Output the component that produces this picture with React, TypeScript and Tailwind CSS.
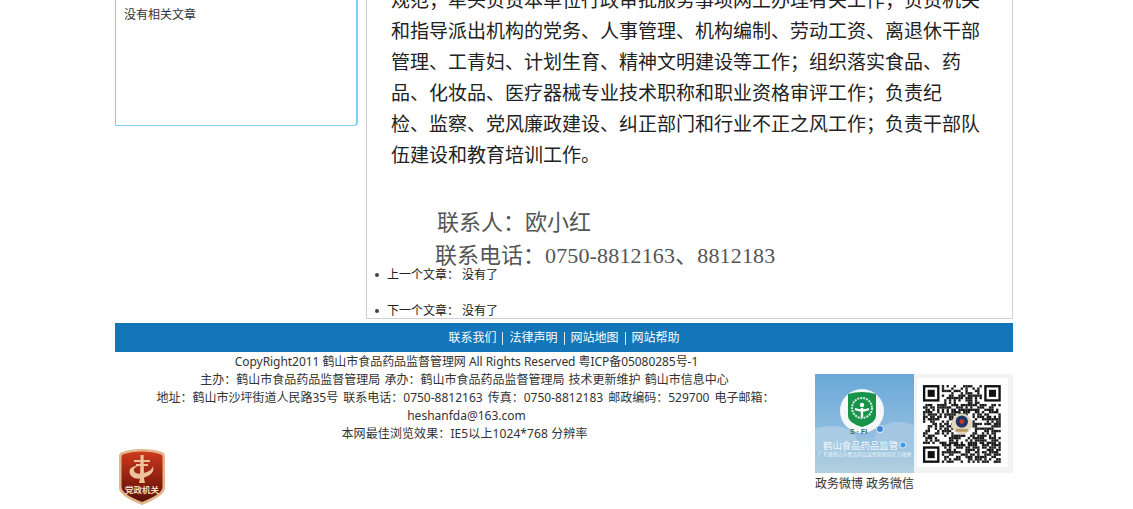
const bodyLines = [
  "规范；牵头负责本单位行政审批服务事项网上办理有关工作；负责机关",
  "和指导派出机构的党务、人事管理、机构编制、劳动工资、离退休干部",
  "管理、工青妇、计划生育、精神文明建设等工作；组织落实食品、药",
  "品、化妆品、医疗器械专业技术职称和职业资格审评工作；负责纪",
  "检、监察、党风廉政建设、纠正部门和行业不正之风工作；负责干部队",
  "伍建设和教育培训工作。",
];

const footerLinks = ["联系我们", "法律声明", "网站地图", "网站帮助"];

function WeiboPicture() {
  return (
    <svg width="99" height="99" viewBox="0 0 99 99" className="block shrink-0">
      <defs>
        <linearGradient id="sky" x1="0" y1="0" x2="0" y2="1">
          <stop offset="0" stopColor="#69a8d8" />
          <stop offset="0.6" stopColor="#8fbde0" />
          <stop offset="1" stopColor="#b4d1e0" />
        </linearGradient>
      </defs>
      <rect width="99" height="99" fill="url(#sky)" />
      <ellipse cx="16" cy="66" rx="26" ry="14" fill="#a9cbe4" />
      <ellipse cx="84" cy="64" rx="24" ry="16" fill="#a3c7e2" />
      <circle cx="47" cy="37" r="22" fill="#f5f8f8" />
      <path d="M33 20q14-4 28 0v22q0 7-14 11q-14-4-14-11z" fill="#17934a" />
      <circle cx="47" cy="34" r="10" fill="none" stroke="#d8efdf" strokeWidth="2" strokeDasharray="2 1" />
      <circle cx="47" cy="31" r="2.2" fill="#fff" />
      <path d="M40 35q7 3 14 0M47 34v9" stroke="#fff" strokeWidth="2.4" fill="none" />
      <text x="35" y="60" fontSize="7" fontWeight="700" fill="#2f6f48" fontFamily="Liberation Sans">S · FI</text>
      <circle cx="65" cy="55" r="3.6" fill="#3d86d0" stroke="#fff" strokeWidth="0.8" />
      <text x="8" y="75" fontSize="9.4" fill="#f4f8fb" fontFamily="Noto Sans CJK SC">鹤山食品药品监管</text>
      <circle cx="88" cy="71" r="3" fill="#3d9ae0" stroke="#e8f3fa" strokeWidth="0.8" />
      <text x="3" y="82" fontSize="4.9" fill="#eef4f8" fontFamily="Noto Sans CJK SC">广东省鹤山市食品药品监督管理局官方微博</text>
    </svg>
  );
}

// finder patterns plus pseudo-random modules
const qrCells: [number, number][] = [];
for (let y = 0; y < 33; y++) {
  for (let x = 0; x < 33; x++) {
    const inFinder = (x < 8 && y < 8) || (x > 24 && y < 8) || (x < 8 && y > 24);
    const inLogo = x > 12 && x < 21 && y > 12 && y < 21;
    if (inFinder || inLogo) continue;
    const h = (((x >> 1) * 31 + (y >> 1) * 17) ^ (x * y * 7) ^ (x * 3 + y)) % 7;
    if (h < 4) qrCells.push([x, y]);
  }
}

function Finder({ x, y }: { x: number; y: number }) {
  return (
    <>
      <rect x={x} y={y} width="7" height="7" fill="#111" />
      <rect x={x + 1} y={y + 1} width="5" height="5" fill="#fff" />
      <rect x={x + 2} y={y + 2} width="3" height="3" fill="#111" />
    </>
  );
}

function QrPicture() {
  return (
    <svg width="99" height="99" viewBox="-3.8 -4.7 42 42" className="block shrink-0">
      <rect x="-3.8" y="-4.7" width="42" height="42" fill="#f3f3f3" />
      <rect x="-2.5" y="-3" width="38.5" height="37.7" fill="#fff" />
      {qrCells.map(([x, y]) => (
        <rect key={x + "-" + y} x={x} y={y} width="1" height="1" fill="#1a1a1a" />
      ))}
      <Finder x={0} y={0} />
      <Finder x={26} y={0} />
      <Finder x={0} y={26} />
      <circle cx="16.5" cy="16.5" r="4.4" fill="#e2d6bd" />
      <circle cx="16.5" cy="15.5" r="2.6" fill="#24346b" />
      <circle cx="16.5" cy="15.5" r="1" fill="#c8392b" />
      <rect x="14" y="18.6" width="5" height="1.2" fill="#b99a63" />
    </svg>
  );
}

function PartyBadge() {
  return (
    <svg width="48" height="58" viewBox="0 0 48 58" className="block">
      <defs>
        <linearGradient id="badge" x1="0" y1="0" x2="0" y2="1">
          <stop offset="0" stopColor="#cb3a1e" />
          <stop offset="0.55" stopColor="#8f1f10" />
          <stop offset="1" stopColor="#571006" />
        </linearGradient>
      </defs>
      <path d="M24 1q12 0 20 3q3 1 3 4v32q0 8-23 17q-23-9-23-17V8q0-3 3-4q8-3 20-3z" fill="#e3b58c" />
      <path d="M24 3.500q11 0 19 3q1.500 .5 1.500 2.500v30q0 7-20.500 15q-20.500-8-20.500-15V9q0-2 1.500-2.500q8-3 19-3z" fill="url(#badge)" />
      <path d="M22.600 7h3l.4 22q0 3 1 6h-6q1-3 1-6z" fill="#edc19b" />
      <path d="M16 13h16M18 17h12" stroke="#edc19b" strokeWidth="2" />
      <path d="M12 21q5-4 8-3q-5 2-4 5q2 4 10 2q8-2 9-7q2 6-5 10q-8 4-14 2q-6-3-4-9z" fill="#edc19b" />
      <text x="24" y="45" textAnchor="middle" fontSize="8.500" fontWeight="700" fill="#f5dcc2" fontFamily="Noto Sans CJK SC">党政机关</text>
    </svg>
  );
}

export default function App() {
  return (
    <div className="h-[509px] overflow-hidden bg-white font-['Noto_Sans','Noto_Sans_CJK_SC',sans-serif] text-xs text-[#333]">
      <div className="ml-[115px] w-[898px]">
        <div className="flex items-start justify-between">
          <div className="h-[126px] w-[243px] rounded-br-sm border-b border-l border-r-2 border-[#7fcdf8] px-[8px] pt-[6px]">
            <p className="leading-[18px]">没有相关文章</p>
          </div>

          <div className="h-[319px] w-[647px] border-x border-b border-[#d0d0d8]">
            <div className="-mt-[15px] h-[278px] pl-[24px] font-['Liberation_Serif','Noto_Sans_CJK_SC',serif] text-[19px] leading-[31px] text-[#222]">
              {bodyLines.map((line) => (
                <p key={line} className="whitespace-nowrap">{line}</p>
              ))}
              <div className="mt-[35px] pl-[46px] text-[22px] leading-[33px] text-[#555]">
                联系人：欧小红
              </div>
              <div className="pl-[44px] text-[22px] leading-[33px] text-[#555]">
                联系电话：<span className="tracking-[0.15px]">0750-8812163、8812183</span>
              </div>
            </div>
            <ul className="mt-[3px] pl-[20px] text-[#222]">
              <li className="relative leading-[18px]">
                <span className="absolute -left-[12px] top-[7px] h-1 w-1 rounded-full bg-[#444]" />
                上一个文章： 没有了
              </li>
              <li className="relative mt-[18px] leading-[18px]">
                <span className="absolute -left-[12px] top-[7px] h-1 w-1 rounded-full bg-[#444]" />
                下一个文章： 没有了
              </li>
            </ul>
          </div>
        </div>

        <div className="mt-1 flex h-[29px] items-center justify-center gap-[6px] bg-[#1276b8] pt-[1px] text-white">
          {footerLinks.map((label, i) => (
            <span key={label} className="flex items-center gap-[6px]">
              {i > 0 && <span className="h-[13px] w-px bg-[#dfe7f5]" />}
              {label}
            </span>
          ))}
        </div>

        <div className="flex items-start">
          <div className="flex-1">
            <div className="ml-[39px] w-[625px] pt-[1px] text-center leading-[18px]">
              <p className="tracking-[-0.05px]">CopyRight2011 鹤山市食品药品监督管理网 All Rights Reserved 粤ICP备05080285号-1</p>
              <p className="pr-[4px] [word-spacing:1px]">主办：鹤山市食品药品监督管理局 承办：鹤山市食品药品监督管理局 技术更新维护 鹤山市信息中心</p>
              <p className="-mx-[10px] whitespace-nowrap pr-[2px] [word-spacing:2px]">地址：鹤山市沙坪街道人民路35号 联系电话：0750-8812163 传真：0750-8812183 邮政编码：529700 电子邮箱：</p>
              <p>heshanfda@163.com</p>
              <p className="pr-[4px] tracking-[0.1px]">本网最佳浏览效果：IE5以上1024*768 分辨率</p>
            </div>
            <div className="ml-[3px] mt-[5px]">
              <PartyBadge />
            </div>
          </div>
          <div className="w-[198px] pt-[22px]">
            <div className="flex">
              <WeiboPicture />
              <QrPicture />
            </div>
            <p className="pt-[1px] leading-[20px]">政务微博 政务微信</p>
          </div>
        </div>
      </div>
    </div>
  );
}
